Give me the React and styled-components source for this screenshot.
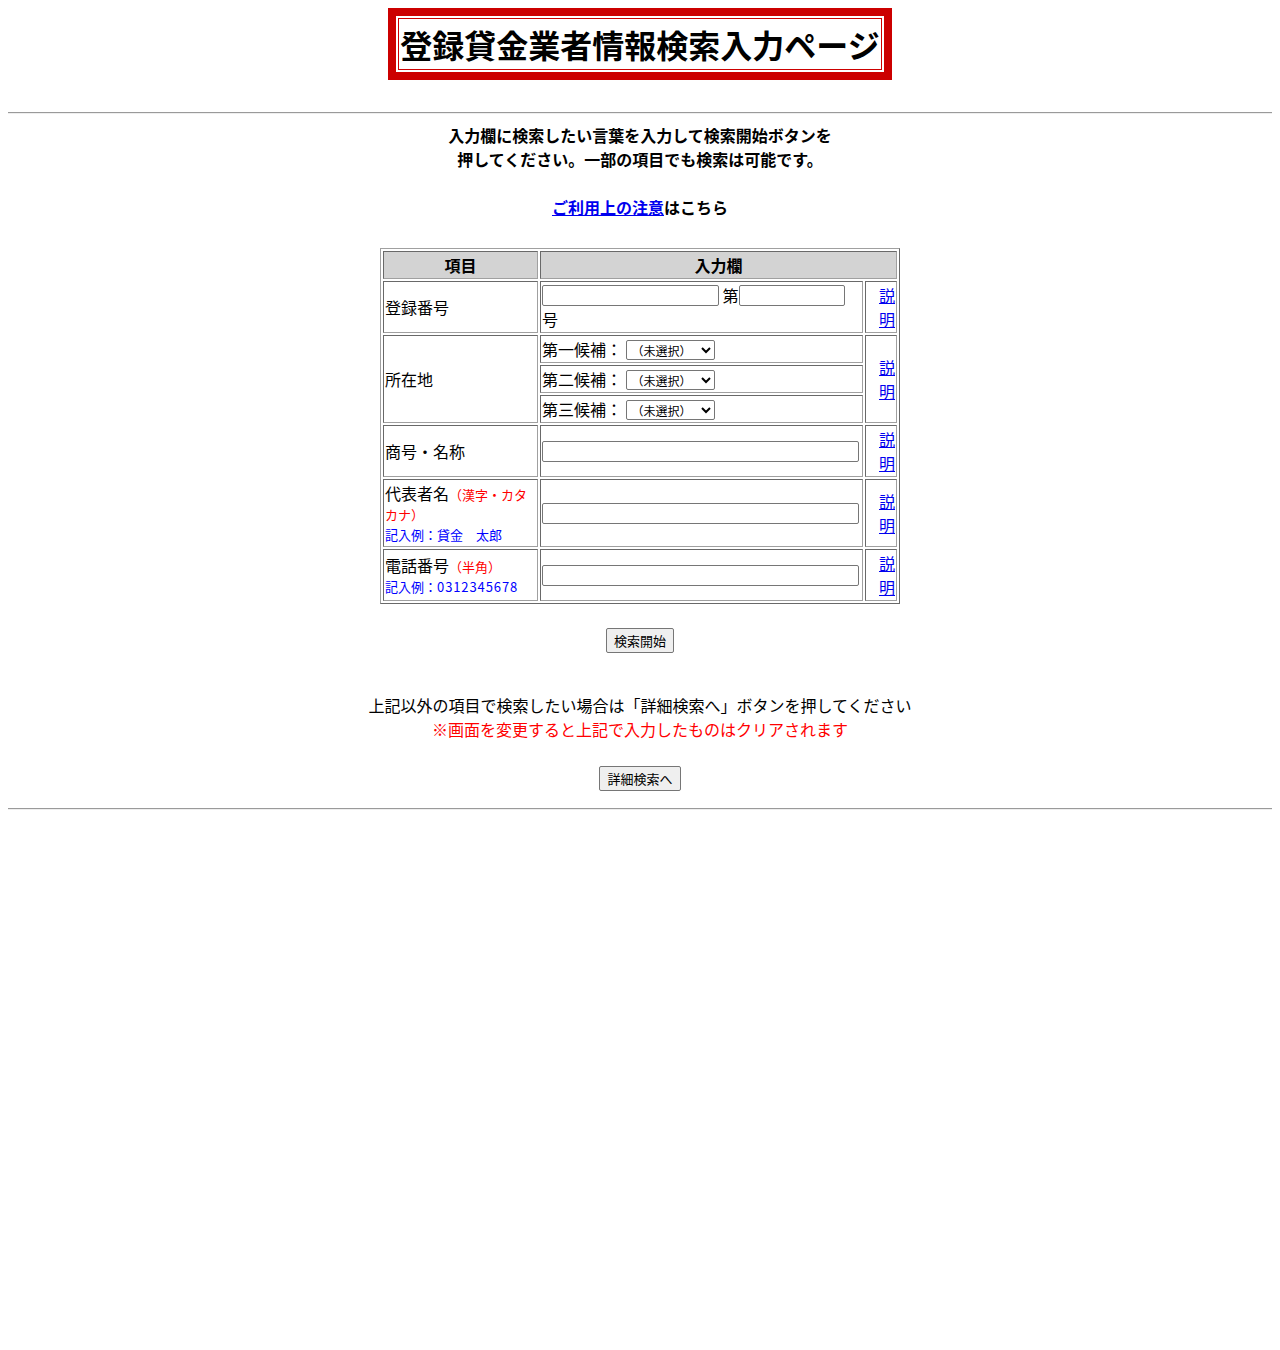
import * as React from 'react';
import styled, { createGlobalStyle } from 'styled-components';

const GlobalStyle = createGlobalStyle`
  body {
    margin: 8px;
    background: #fff;
    color: #000;
    font-family: "Noto Sans CJK JP", "Noto Sans", sans-serif;
    font-size: 16px;
  }
`;

const Page = styled.div`
  text-align: center;
`;

const TitleWrap = styled.div`
  display: flex;
  justify-content: center;
`;

const TitleOuter = styled.div`
  border: 8px solid #cc0000;
  padding: 2px;
`;

const Title = styled.h1`
  margin: 0;
  border: 1px solid #cc0000;
  padding: 0 1px;
  font-size: 32px;
  line-height: 50px;
  font-weight: bold;
  white-space: nowrap;
`;

const Rule = styled.hr`
  height: 0;
  margin: ${(p) => p.$top || 0}px 0 0;
  border: none;
  border-top: 1px solid #9a9a9a;
  border-bottom: 1px solid #eeeeee;
`;

const Intro = styled.p`
  margin: 9px 0 0;
  padding-bottom: 1px;
  font-weight: bold;
  line-height: 24px;
`;

const Link = styled.a`
  color: #0000ee;
  text-decoration: underline;
`;

const FormTable = styled.table`
  width: 520px;
  margin: 28px auto 0;
  border-collapse: separate;
  border-spacing: 2px;
  border: 1px solid;
  border-color: #a0a0a0 #696969 #696969 #a0a0a0;
  text-align: left;
`;

const Cell = styled.td`
  border: 1px solid;
  border-color: #696969 #a0a0a0 #a0a0a0 #696969;
  padding: 1px;
  font-size: 16px;
  line-height: 24px;
  vertical-align: middle;
  text-align: ${(p) => p.$align || 'left'};
  ${(p) => (p.$w ? `width: ${p.$w}px;` : '')}
`;

const HeadCell = styled(Cell).attrs({ as: 'th' })`
  background: #d3d3d3;
  font-weight: bold;
  text-align: center;
`;

const LabelCell = styled(Cell)`
  width: 151px;
  font-size: 13px;
  line-height: 20px;
`;

const LabelMain = styled.span`
  font-size: 16px;
  line-height: 24px;
`;

const Note = styled.span`
  color: ${(p) => (p.$blue ? '#0000ff' : '#ff0000')};
  font-size: 13px;
  line-height: 20px;
`;

const Digits = styled.span`
  letter-spacing: 0.9px;
`;

const TextInput = styled.input`
  box-sizing: border-box;
  width: ${(p) => p.$w}px;
  height: 21px;
  margin: 2px 0 0;
  padding: 1px 2px;
  border: 1px solid #767676;
  border-radius: 2px;
  background: #fff;
  font: 13px "Noto Sans CJK JP", sans-serif;
  vertical-align: top;
`;

const Select = styled.select`
  box-sizing: border-box;
  width: 89px;
  height: 20px;
  margin: 3px 0 0;
  padding: 0 0 0 1px;
  border: 1px solid #767676;
  border-radius: 2px;
  background: #fff;
  color: #000;
  font: 12px "Noto Sans CJK JP", sans-serif;
  line-height: 16px;
  vertical-align: top;
`;

const ButtonRow = styled.div`
  display: flex;
  justify-content: center;
  margin-top: ${(p) => p.$top}px;
`;

const Button = styled.button`
  padding: 2px 7px;
  border: 1px solid #767676;
  border-radius: 2px;
  background: #efefef;
  color: #000;
  font: 13px/19px "Noto Sans CJK JP", sans-serif;
`;

const Notice = styled.div`
  margin-top: 40px;
  line-height: 24px;
`;

const Warning = styled.div`
  color: #ff0000;
`;

const candidates = ['第一候補', '第二候補', '第三候補'];

const HelpCell = ({ rowSpan }) => (
  <Cell $w={28} $align="right" rowSpan={rowSpan}>
    <Link href="#">説明</Link>
  </Cell>
);

export const App = () => {
  return (
    <Page>
      <GlobalStyle />
      <TitleWrap>
        <TitleOuter>
          <Title>登録貸金業者情報検索入力ページ</Title>
        </TitleOuter>
      </TitleWrap>
      <Rule $top={32} />
      <Intro>
        入力欄に検索したい言葉を入力して検索開始ボタンを
        <br />
        押してください。一部の項目でも検索は可能です。
        <br />
        <br />
        <Link href="#">ご利用上の注意</Link>はこちら
      </Intro>

      <FormTable>
        <thead>
          <tr>
            <HeadCell>項目</HeadCell>
            <HeadCell colSpan={2}>入力欄</HeadCell>
          </tr>
        </thead>
        <tbody>
          <tr>
            <LabelCell>
              <LabelMain>登録番号</LabelMain>
            </LabelCell>
            <Cell>
              <TextInput $w={177} /> 第<TextInput $w={106} />
              <br />号
            </Cell>
            <HelpCell />
          </tr>
          {candidates.map((c, i) => (
            <tr key={c}>
              {i === 0 && (
                <LabelCell rowSpan={3}>
                  <LabelMain>所在地</LabelMain>
                </LabelCell>
              )}
              <Cell>
                {c}： <Select defaultValue="">
                  <option value="">（未選択）</option>
                </Select>
              </Cell>
              {i === 0 && <HelpCell rowSpan={3} />}
            </tr>
          ))}
          <tr>
            <LabelCell>
              <LabelMain>商号・名称</LabelMain>
            </LabelCell>
            <Cell>
              <TextInput $w={317} />
            </Cell>
            <HelpCell />
          </tr>
          <tr>
            <LabelCell>
              <LabelMain>代表者名</LabelMain>
              <Note>（漢字・カタカナ）</Note>
              <br />
              <Note $blue>記入例：貸金　太郎</Note>
            </LabelCell>
            <Cell>
              <TextInput $w={317} />
            </Cell>
            <HelpCell />
          </tr>
          <tr>
            <LabelCell>
              <LabelMain>電話番号</LabelMain>
              <Note>（半角）</Note>
              <br />
              <Note $blue>
                記入例：<Digits>0312345678</Digits>
              </Note>
            </LabelCell>
            <Cell>
              <TextInput $w={317} />
            </Cell>
            <HelpCell />
          </tr>
        </tbody>
      </FormTable>

      <ButtonRow $top={24}>
        <Button type="button">検索開始</Button>
      </ButtonRow>

      <Notice>
        上記以外の項目で検索したい場合は「詳細検索へ」ボタンを押してください
        <Warning>※画面を変更すると上記で入力したものはクリアされます</Warning>
      </Notice>

      <ButtonRow $top={25}>
        <Button type="button">詳細検索へ</Button>
      </ButtonRow>
      <Rule $top={17} />
    </Page>
  );
};

export default App;
